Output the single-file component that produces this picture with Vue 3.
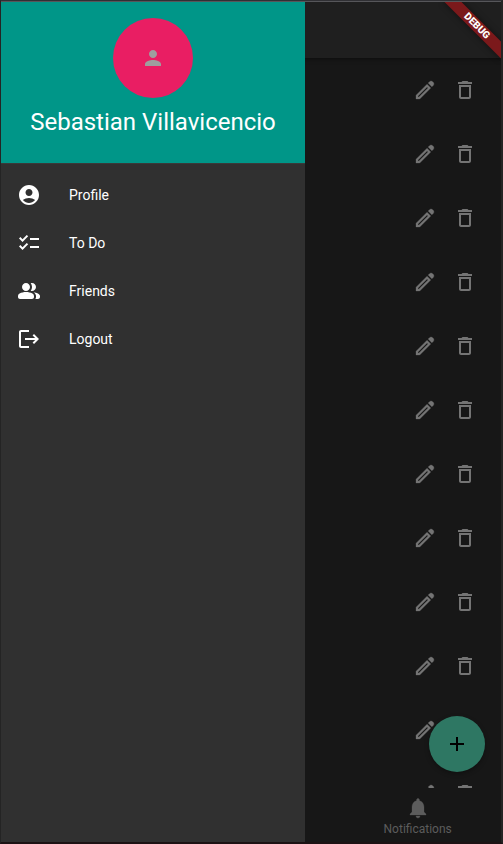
<script setup>
const icons = {
  profile: 'M12 2C6.48 2 2 6.48 2 12s4.48 10 10 10 10-4.48 10-10S17.52 2 12 2zM12 6c1.93 0 3.5 1.57 3.5 3.5S13.93 13 12 13s-3.5-1.57-3.5-3.5S10.07 6 12 6zM12 20c-2.03 0-4.43-.82-6.14-2.88C7.55 15.8 9.68 15 12 15s4.45.8 6.14 2.12C16.43 19.18 14.03 20 12 20z',
  todo: 'M22 7h-9v2h9V7zM22 15h-9v2h9v-2zM5.54 11L2 7.46l1.41-1.41 2.12 2.12 4.24-4.24 1.41 1.41L5.54 11zM5.54 19L2 15.46l1.41-1.41 2.12 2.12 4.24-4.24 1.41 1.41L5.54 19z',
  friends: 'M16.67 13.13C18.04 14.06 19 15.32 19 17v1c0 .8-.2 1.4-.6 2H21c1.1 0 2-.9 2-2v-1c0-2.18-3.57-3.47-6.33-3.87zM15 12c2.21 0 4-1.79 4-4s-1.79-4-4-4c-.47 0-.91.1-1.33.24C14.5 5.27 15 6.58 15 8s-.5 2.73-1.33 3.76c.42.14.86.24 1.33.24zM9 12c2.21 0 4-1.79 4-4s-1.79-4-4-4-4 1.79-4 4 1.79 4 4 4zM9 13c-2.3 0-4.5.5-6.4 1.5C1.6 15 1 16.1 1 17.2V18c0 1.1.9 2 2 2h12c1.1 0 2-.9 2-2v-.8c0-1.1-.6-2.2-1.6-2.7C13.5 13.5 11.3 13 9 13z',
  logout: 'M17 7l-1.41 1.41L18.17 11H8v2h10.17l-2.58 2.58L17 17l5-5-5-5zM4 5h8V3H4c-1.1 0-2 .9-2 2v14c0 1.1.9 2 2 2h8v-2H4V5z',
  person: 'M12 12c2.21 0 4-1.79 4-4s-1.79-4-4-4-4 1.79-4 4 1.79 4 4 4zm0 2c-2.67 0-8 1.34-8 4v2h16v-2c0-2.66-5.33-4-8-4z',
  edit: 'M14.06 9.02l.92.92L5.92 19H5v-.92l9.06-9.06M15.13 5.12l1.4-1.4c.9-.9 2.3-.8 3.1 0l.65.65c.8.8.9 2.2 0 3.1l-1.4 1.4-3.75-3.75zM14.06 6.19L3 17.25V21h3.75L17.81 9.94l-3.75-3.75z',
  remove: 'M6 19c0 1.1.9 2 2 2h8c1.1 0 2-.9 2-2V7H6v12zM8 9h8v10H8V9zm7.5-5l-1-1h-5l-1 1H5v2h14V4h-3.5z',
  add: 'M19 13h-6v6h-2v-6H5v-2h6V5h2v6h6v2z',
  bell: 'M12 22c1.1 0 2-.9 2-2h-4c0 1.1.89 2 2 2zm6-6v-5c0-3.07-1.64-5.64-4.5-6.32V4c0-.83-.67-1.5-1.5-1.5s-1.5.67-1.5 1.5v.68C7.63 5.36 6 7.92 6 11v5l-2 2v1h16v-1l-2-2z',
}

const menu = [
  { label: 'Profile', icon: icons.profile },
  { label: 'To Do', icon: icons.todo },
  { label: 'Friends', icon: icons.friends },
  { label: 'Logout', icon: icons.logout },
]

const rows = 12
</script>

<template>
  <div class="window">
    <div class="screen">
      <header class="appbar"></header>
      <main class="list">
        <ul>
          <li v-for="n in rows" :key="n" class="row">
            <button type="button" class="icon-button" aria-label="Edit">
              <svg class="icon bold" viewBox="0 0 24 24"><path :d="icons.edit" fill-rule="evenodd" /></svg>
            </button>
            <button type="button" class="icon-button" aria-label="Delete">
              <svg class="icon" viewBox="0 0 24 24"><path :d="icons.remove" /></svg>
            </button>
          </li>
        </ul>
        <button type="button" class="fab" aria-label="Add">
          <svg class="icon" viewBox="0 0 24 24"><path :d="icons.add" /></svg>
        </button>
      </main>
      <nav class="tabs">
        <a href="#notifications" class="tab">
          <svg class="icon bold" viewBox="0 0 24 24"><path :d="icons.bell" /></svg>
          <span>Notifications</span>
        </a>
      </nav>

      <aside class="drawer">
        <div class="drawer-header">
          <div class="avatar">
            <svg class="icon" viewBox="0 0 24 24"><path :d="icons.person" /></svg>
          </div>
          <div class="name">Sebastian Villavicencio</div>
        </div>
        <nav class="menu">
          <a v-for="item in menu" :key="item.label" href="#" class="menu-item">
            <svg class="icon" viewBox="0 0 24 24"><path :d="item.icon" fill-rule="evenodd" /></svg>
            <span>{{ item.label }}</span>
          </a>
        </nav>
      </aside>

      <div class="corner"><span class="banner">DEBUG</span></div>
    </div>
  </div>
</template>

<style>
body {
  margin: 0;
  background: #171717;
}
</style>

<style scoped>
.window {
  box-sizing: border-box;
  height: 100vh;
  border-style: solid;
  border-width: 1px 2px 2px 1px;
  border-color: #303034 #242424 #1c1214 #242424;
  font-family: Roboto, sans-serif;
}
.screen {
  position: relative;
  box-sizing: border-box;
  height: 100%;
  display: flex;
  flex-direction: column;
  overflow: hidden;
  border-top: 1px solid #56565a;
  background: #171717;
}
.icon {
  display: block;
  width: 24px;
  height: 24px;
  flex: none;
  fill: currentColor;
}
.bold {
  stroke: currentColor;
  stroke-width: 0.3;
}
button {
  padding: 0;
  border: 0;
  background: none;
  font: inherit;
}
a {
  color: inherit;
  text-decoration: none;
}
.appbar {
  position: relative;
  flex: none;
  height: 56px;
  background: #1f1f1f;
  box-shadow: 0 1px 4px rgba(0, 0, 0, 0.5);
}
.list {
  position: relative;
  flex: 1;
  min-height: 0;
}
ul {
  height: 100%;
  margin: 0;
  padding: 0;
  overflow: hidden;
  list-style: none;
}
.row {
  display: flex;
  justify-content: flex-end;
  align-items: center;
  height: 64px;
  padding-right: 16px;
}
.icon-button {
  display: grid;
  place-items: center;
  width: 40px;
  height: 40px;
  color: #747474;
}
.fab {
  position: absolute;
  right: 16px;
  bottom: 16px;
  display: grid;
  place-items: center;
  width: 56px;
  height: 56px;
  border-radius: 50%;
  background: #2e7763;
  color: #000;
  box-shadow: 0 2px 5px rgba(0, 0, 0, 0.3);
}
.tabs {
  flex: none;
  display: grid;
  grid-template-columns: repeat(3, 1fr);
  height: 54px;
  background: #171717;
}
.tab {
  grid-column: 3;
  display: flex;
  flex-direction: column;
  align-items: center;
  padding-top: 8px;
  gap: 2px;
  font-size: 12px;
  line-height: 14px;
  color: #5c5c5c;
}
.drawer {
  position: absolute;
  top: 0;
  bottom: 0;
  left: 0;
  width: 304px;
  background: #303030;
}
.drawer-header {
  box-sizing: border-box;
  display: flex;
  flex-direction: column;
  align-items: center;
  gap: 10px;
  height: 162px;
  padding-top: 16px;
  border-bottom: 1px solid #3a3a3a;
  background: #009688;
}
.avatar {
  display: grid;
  place-items: center;
  width: 80px;
  height: 80px;
  border-radius: 50%;
  background: #e91e63;
  color: #9e9e9e;
}
.name {
  font-size: 24px;
  line-height: 28px;
  white-space: nowrap;
  color: #fff;
}
.menu {
  padding-top: 7px;
}
.menu-item {
  display: flex;
  align-items: center;
  gap: 28px;
  height: 48px;
  padding: 0 16px;
  font-size: 14px;
  font-weight: 400;
  line-height: 16px;
  color: #fff;
}
.corner {
  position: absolute;
  top: 0;
  right: 0;
  width: 64px;
  height: 64px;
  overflow: hidden;
  pointer-events: none;
}
.banner {
  position: absolute;
  top: 18px;
  right: -16px;
  width: 80px;
  height: 12px;
  background: #7b191b;
  box-shadow: 0 0 6px rgba(0, 0, 0, 0.5);
  color: #fff;
  font-size: 10px;
  font-weight: 900;
  line-height: 12px;
  text-align: center;
  transform: rotate(45deg);
}
</style>
